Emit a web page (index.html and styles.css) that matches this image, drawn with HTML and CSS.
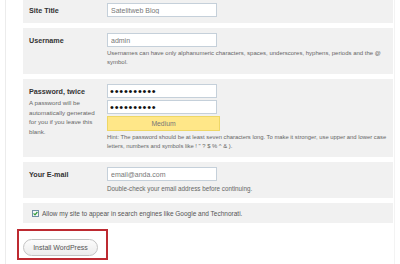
FILE: index.html
```html
<!DOCTYPE html>
<html lang="en">
<head>
    <meta charset="UTF-8">
    <meta name="viewport" content="width=device-width, initial-scale=1.0">
    <title>WordPress Install</title>
    <link rel="stylesheet" href="styles.css">
</head>
<body>
    <div class="page">
        <form class="setup" onsubmit="return false">
            <div class="row">
                <label class="field-label" for="weblog_title">Site Title</label>
                <div class="field">
                    <input class="text" type="text" id="weblog_title" value="Satelitweb Blog">
                </div>
            </div>

            <div class="row">
                <label class="field-label" for="user_name">Username</label>
                <div class="field">
                    <input class="text" type="text" id="user_name" value="admin">
                    <p class="hint">Usernames can have only alphanumeric characters, spaces, underscores, hyphens, periods and the @ symbol.</p>
                </div>
            </div>

            <div class="row row-pass">
                <div class="field-label">
                    <label for="pass1">Password, twice</label>
                    <p class="label-note">A password will be automatically generated for you if you leave this blank.</p>
                </div>
                <div class="field">
                    <input class="text pass" type="password" id="pass1" value="xxxxxxxxxx">
                    <input class="text pass" type="password" id="pass2" value="xxxxxxxxxx">
                    <div class="strength">Medium</div>
                    <p class="hint">Hint: The password should be at least seven characters long. To make it stronger, use upper and lower case letters, numbers and symbols like ! " ? $ % ^ &amp; ).</p>
                </div>
            </div>

            <div class="row row-email">
                <label class="field-label" for="admin_email">Your E-mail</label>
                <div class="field">
                    <input class="text" type="text" id="admin_email" value="email@anda.com">
                    <p class="hint">Double-check your email address before continuing.</p>
                </div>
            </div>

            <div class="row row-check">
                <span class="check">
                    <svg width="5" height="5" viewBox="0 0 5 5"><path d="M0.6 2.4 L2 3.8 L4.4 1" fill="none" stroke="#2c9a36" stroke-width="1.2"/></svg>
                </span>
                <span class="check-text">Allow my site to appear in search engines like Google and Technorati.</span>
            </div>

            <div class="submit-mark">
                <button class="button" type="submit">Install WordPress</button>
            </div>
        </form>
    </div>
</body>
</html>
```

FILE: styles.css
```css
* {
    margin: 0;
    padding: 0;
    box-sizing: border-box;
}

body {
    font-family: "Liberation Sans", Arial, sans-serif;
    background: #fff;
    color: #333;
    height: 264px;
    overflow: hidden;
}

.page {
    margin-left: 5px;
    width: 390px;
    height: 264px;
    padding-left: 17px;
    padding-right: 1px;
    border-left: 1px solid #ececec;
    border-right: 1px solid #f3f3f3;
}

.row {
    background: #f1f1f1;
    display: grid;
    grid-template-columns: 84px 1fr;
    padding: 5px 0 5px;
    margin-bottom: 5px;
}

.row:first-child {
    padding-top: 3px;
}

.field-label {
    padding-left: 6px;
    padding-top: 1px;
    font-size: 7.2px;
    font-weight: bold;
    line-height: 14px;
    color: #333;
}

.label-note {
    font-weight: normal;
    font-size: 6.2px;
    line-height: 9.7px;
    color: #666;
    width: 66px;
    margin-top: -1px;
}

.text {
    display: block;
    width: 110px;
    height: 14px;
    border: 1px solid #c5d0da;
    background: #fff;
    padding: 0 3px;
    font-family: inherit;
    font-size: 7px;
    color: #777;
    outline: none;
}

.text.pass {
    font-size: 11px;
    letter-spacing: 0.8px;
    color: #111;
    padding-left: 2px;
    margin-bottom: 2px;
}

.strength {
    width: 113px;
    height: 15px;
    margin-top: 1px;
    background: #ffe788;
    border: 1px solid #eed766;
    text-align: center;
    font-size: 6.8px;
    line-height: 13px;
    color: #777;
}

.hint {
    font-size: 6px;
    line-height: 9px;
    color: #666;
    margin-top: 2px;
    padding-right: 2px;
}

.row:nth-child(2) {
    padding-bottom: 7px;
}

.row-pass {
    padding-bottom: 6px;
}

.row-pass .hint {
    font-size: 5.85px;
}

.row-email .hint {
    margin-top: 3px;
    font-size: 6.3px;
}

.row-check {
    display: flex;
    align-items: center;
    height: 20px;
    padding: 0 0 0 9px;
    gap: 3px;
    margin-bottom: 6px;
}

.check {
    width: 7px;
    height: 7px;
    border: 1px solid #6f8fa6;
    background: #f4f7f8;
    display: flex;
    align-items: center;
    justify-content: center;
}

.check svg {
    display: block;
}

.check-text {
    font-size: 6.5px;
    color: #555;
}

.submit-mark {
    margin-left: -6px;
    width: 91px;
    border: 2px solid #bd2a31;
    padding: 8px 8px 2px 4px;
}

.button {
    display: block;
    width: 75px;
    height: 17px;
    border: 1px solid #c4c4c4;
    border-radius: 9px;
    background: linear-gradient(#fcfcfc, #ececec);
    font-family: inherit;
    font-size: 7px;
    color: #555;
    cursor: pointer;
}
```
